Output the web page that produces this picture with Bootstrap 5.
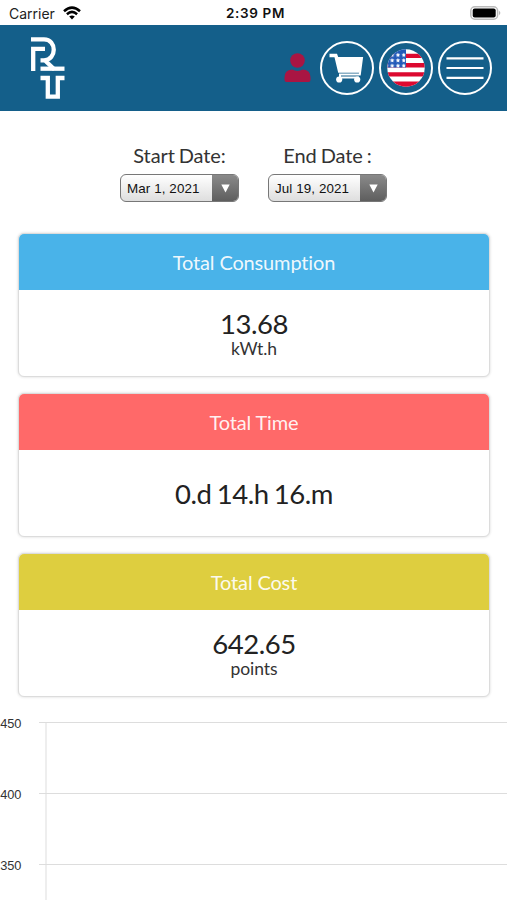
<!DOCTYPE html>
<html lang="en">
<head>
<meta charset="utf-8">
<meta name="viewport" content="width=device-width, initial-scale=1">
<title>Consumption</title>
<link href="https://cdn.jsdelivr.net/npm/bootstrap@5.3.0/dist/css/bootstrap.min.css" rel="stylesheet">
<style>
body{font-family:Lato,sans-serif;color:#212529;background:#fff;height:900px;overflow:hidden;font-variant-ligatures:none}
svg{display:block}
.status{height:25px;font:14px/25px Inter,sans-serif;color:#222;padding:1px 5px 0 9px}
.status>*{flex:1 1 0}
.status .carrier{font-size:14px}
.clock{font-weight:600;font-size:13.5px;letter-spacing:.65px;color:#111}
.topbar{height:86px;background:#145f8a;padding:0 15px 0 30px}
.round-btn{width:54px;height:54px;border:2.5px solid #fff;border-radius:50%;background:transparent;padding:0}
.tools{gap:5px}
.dates{padding-top:32px;gap:29px}
.date-field{width:119px}
.date-field label{font-size:20px;line-height:24px;color:#333;white-space:nowrap;letter-spacing:-.1px;word-spacing:-1px}
.picker{width:119px;height:28px;margin-top:5px;border:1.5px solid #777;border-radius:6px;overflow:hidden;background:linear-gradient(#fff,#dedede);font:13.4px/27px "Liberation Sans",Arial,sans-serif;letter-spacing:.1px;color:#111;padding:0}
.picker .txt{padding-left:6px;white-space:nowrap}
.picker .arrow{width:26px;background:linear-gradient(#8a8a8a,#5e5e5e)}
.stats{padding:31px 17px 0 18px;gap:16px}
.stat{height:144px;border:1px solid #dcdcdc;border-radius:6px;box-shadow:0 0 3px rgba(0,0,0,.16);overflow:hidden}
.stat .card-header{height:56px;font-size:20px;line-height:57px;padding:0;border:0;color:rgba(255,255,255,.93);border-radius:0;letter-spacing:-.15px}
.blue{background:#49b3e9}.red{background:#ff6969}.gold{background:#dece3f}
.stat .card-body{padding:2px 0 0}
.num{font-size:27.5px;line-height:30px;color:#222;letter-spacing:-.45px;word-spacing:-1.5px}
.unit{font-size:17.5px;line-height:20px;color:#333;letter-spacing:-.1px}
.plot{height:201px}
.plot text{font:12.8px "Liberation Sans",Arial,sans-serif;fill:#333}
</style>
<script src="https://cdn.jsdelivr.net/npm/bootstrap@5.3.0/dist/js/bootstrap.bundle.min.js"></script>
</head>
<body>
<div class="status d-flex align-items-center">
  <div class="d-flex align-items-center"><span class="carrier">Carrier</span>
    <svg class="ms-2" width="18" height="14" viewBox="0 0 18 14" fill="none" stroke="#000" stroke-width="2.5"><path d="M1 5.2Q9-2 17 5.2M3.9 8.2Q9 3.6 14.1 8.2"/><path d="M9 13.5 6.2 10.6Q9 8.3 11.8 10.6Z" fill="#000" stroke="none"/></svg>
  </div>
  <div class="clock text-center">2:39 PM</div>
  <div class="d-flex justify-content-end">
    <svg width="32" height="14" viewBox="0 0 32 14"><rect x=".8" y=".8" width="26.8" height="12.4" rx="4" fill="#fff" stroke="#bbb" stroke-width="1.5"/><rect x="2.7" y="2.5" width="23" height="9" rx="2" fill="#000"/><path d="M29.2 4.8q2.2 2.2 0 4.4z" fill="#aaa"/></svg>
  </div>
</div>
<nav class="topbar d-flex align-items-center justify-content-between">
  <svg width="36" height="64" viewBox="0 0 36 64" fill="none" stroke="#fff" stroke-width="4.3">
    <path d="M1 3.4H14C27 3.4 27 24 14 24.3H10.5M14.5 24l10 9.5M3.2 35V12.8H15"/>
    <path d="M10.5 32.7H34.5"/>
    <path d="M10.5 42H17.8V60.6H27.8V42H34.5"/>
  </svg>
  <div class="tools d-flex align-items-center">
    <svg class="me-1" width="27" height="30" viewBox="0 0 27 30" fill="#a91543"><circle cx="13.5" cy="7.5" r="7.3"/><path d="M.5 29V24.5Q.5 17 8 16.5Q13.5 19.3 19 16.5Q26.5 17 26.5 24.5V27Q26.5 29 24.5 29H2.5Q.5 29 .5 27Z"/></svg>
    <button class="round-btn" aria-label="Cart">
      <svg width="50" height="50" viewBox="0 0 50 50"><path d="M14.5 15H40l-2.2 16.5H18v3h19" fill="none" stroke="#fff" stroke-width="2"/><path d="M7.5 10.7h7.5l1.2 3.3H40L37.6 29.8H16.2L12.5 14.3H7.5z" fill="#fff"/><circle cx="17.2" cy="36.5" r="3.1" fill="#fff"/><circle cx="35.2" cy="36.5" r="3.1" fill="#fff"/></svg>
    </button>
    <button class="round-btn" aria-label="Language">
      <svg width="50" height="50" viewBox="0 0 50 50"><defs><clipPath id="disc"><circle cx="25" cy="25" r="18.7"/></clipPath><pattern id="stars" x="8.4" y="9" width="5.8" height="5.4" patternUnits="userSpaceOnUse"><path d="M2.8.7l.7 1.4 1.6.2-1.2 1.1.3 1.6-1.4-.8-1.4.8.3-1.6L.5 2.3l1.6-.2z" fill="#fff"/></pattern></defs>
      <g clip-path="url(#disc)"><path fill="#fff" d="M0 0h50v50H0z"/><path fill="#dc0930" d="M0 10.8h50v4.2H0zM0 20h50v4.4H0zM0 29.2h50v4.2H0zM0 38.5h50v6H0z"/><path fill="#2259b8" d="M0 0h25v24.5H0z"/><path fill="url(#stars)" d="M6 9h18.5v16H6z"/></g></svg>
    </button>
    <button class="round-btn" aria-label="Menu">
      <svg width="50" height="50" viewBox="0 0 50 50"><path d="M6.5 15.3h37M6.5 25h37M6.5 34.8h37" stroke="#fff" stroke-width="2.2"/></svg>
    </button>
  </div>
</nav>
<section class="dates d-flex justify-content-center">
  <div class="date-field text-center"><label for="from">Start Date:</label>
    <button id="from" class="picker d-flex justify-content-between"><span class="txt">Mar 1, 2021</span><span class="arrow d-flex align-items-center justify-content-center"><svg width="9" height="9" viewBox="0 0 9 9"><path d="M.3.5h8.4L4.5 8.5z" fill="#fff"/></svg></span></button></div>
  <div class="date-field text-center"><label for="to">End Date :</label>
    <button id="to" class="picker d-flex justify-content-between"><span class="txt">Jul 19, 2021</span><span class="arrow d-flex align-items-center justify-content-center"><svg width="9" height="9" viewBox="0 0 9 9"><path d="M.3.5h8.4L4.5 8.5z" fill="#fff"/></svg></span></button></div>
</section>
<main class="stats d-flex flex-column text-center">
  <div class="card stat"><div class="card-header blue">Total Consumption</div><div class="card-body d-flex flex-column justify-content-center"><div class="num">13.68</div><div class="unit">kWt.h</div></div></div>
  <div class="card stat"><div class="card-header red">Total Time</div><div class="card-body d-flex flex-column justify-content-center"><div class="num">0.d 14.h 16.m</div></div></div>
  <div class="card stat"><div class="card-header gold">Total Cost</div><div class="card-body d-flex flex-column justify-content-center"><div class="num">642.65</div><div class="unit">points</div></div></div>
</main>
<section class="plot">
  <svg width="507" height="204" viewBox="0 0 507 204"><path d="M39 25.5H507M39 96.5H507M39 167.5H507M46 25.5V204" stroke="#ddd" fill="none"/>
  <text x="21.5" y="30.5" text-anchor="end">450</text><text x="21.5" y="101.5" text-anchor="end">400</text><text x="21.5" y="172.5" text-anchor="end">350</text></svg>
</section>
</body>
</html>
